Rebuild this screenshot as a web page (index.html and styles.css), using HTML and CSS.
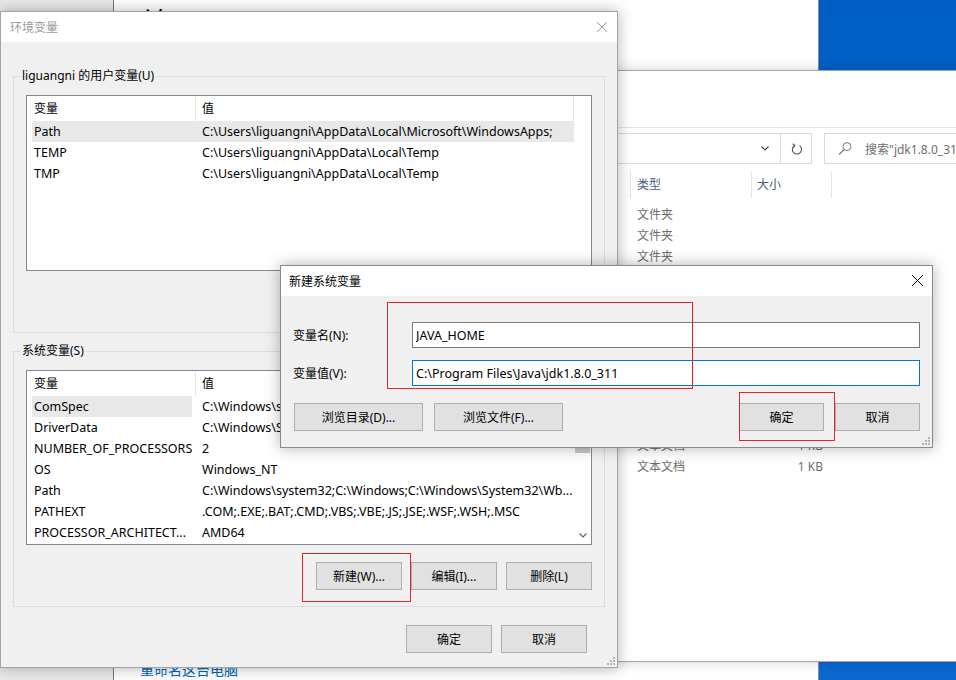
FILE: index.html
```html
<!DOCTYPE html>
<html lang="zh-CN">
<head>
    <meta charset="UTF-8">
    <title>环境变量</title>
    <link rel="stylesheet" href="styles.css">
</head>
<body>
<div class="desktop">

    <!-- windows behind the dialogs -->
    <div class="window side-window"></div>

    <div class="window settings">
        <h1 class="settings-title">关于</h1>
        <a class="settings-link">重命名这台电脑</a>
    </div>

    <div class="window explorer">
        <div class="ribbon"></div>
        <div class="nav-row">
            <div class="address">
                <span class="address-drop">
                    <svg width="8" height="5" viewBox="0 0 8 5"><path d="M0.5 0.5L4 4L7.5 0.5" fill="none" stroke="#444" stroke-width="1.1"/></svg>
                </span>
                <span class="address-refresh">
                    <svg width="12" height="12" viewBox="0 0 12 12"><path d="M3.6 2.4A4.6 4.6 0 1 0 8.6 2.6" fill="none" stroke="#555" stroke-width="1.1"/><path d="M1.6 0.8L3.9 2.5L2.2 4.6" fill="none" stroke="#555" stroke-width="1.1"/></svg>
                </span>
            </div>
            <div class="search">
                <svg width="14" height="13" viewBox="0 0 14 13"><circle cx="9" cy="4.6" r="4" fill="none" stroke="#777" stroke-width="1"/><path d="M6.2 7.5L1 12.5" stroke="#777" stroke-width="1.1"/></svg>
                <span>搜索"jdk1.8.0_311"</span>
            </div>
        </div>
        <div class="file-head">
            <div class="fcol fcol-name"></div>
            <div class="fcol fcol-type">类型</div>
            <div class="fcol fcol-size">大小</div>
        </div>
        <div class="file-list">
            <div class="file-row"><span class="f-name">bin</span><span class="f-type">文件夹</span><span class="f-size"></span></div>
            <div class="file-row"><span class="f-name">include</span><span class="f-type">文件夹</span><span class="f-size"></span></div>
            <div class="file-row"><span class="f-name">jre</span><span class="f-type">文件夹</span><span class="f-size"></span></div>
            <div class="file-row"><span class="f-name">legal</span><span class="f-type">文件夹</span><span class="f-size"></span></div>
            <div class="file-row"><span class="f-name">lib</span><span class="f-type">文件夹</span><span class="f-size"></span></div>
            <div class="file-row"><span class="f-name">COPYRIGHT</span><span class="f-type">文件</span><span class="f-size">4 KB</span></div>
            <div class="file-row"><span class="f-name">javafx-src.zip</span><span class="f-type">压缩(zipped)文件夹</span><span class="f-size">5,097 KB</span></div>
            <div class="file-row"><span class="f-name">LICENSE</span><span class="f-type">文件</span><span class="f-size">1 KB</span></div>
            <div class="file-row"><span class="f-name">README.html</span><span class="f-type">HTML 文档</span><span class="f-size">1 KB</span></div>
            <div class="file-row"><span class="f-name">release</span><span class="f-type">文件</span><span class="f-size">1 KB</span></div>
            <div class="file-row"><span class="f-name">src.zip</span><span class="f-type">压缩(zipped)文件夹</span><span class="f-size">20,678 KB</span></div>
            <div class="file-row"><span class="f-name">jmc.txt</span><span class="f-type">文本文档</span><span class="f-size">1 KB</span></div>
            <div class="file-row"><span class="f-name">javafx.txt</span><span class="f-type">文本文档</span><span class="f-size">1 KB</span></div>
        </div>
    </div>

    <!-- 环境变量 -->
    <div class="window dialog env-dialog">
        <div class="titlebar">
            <span class="title">环境变量</span>
            <svg class="close" width="10" height="10" viewBox="0 0 10 10"><path d="M0 0L10 10M10 0L0 10" stroke="#999" stroke-width="1"/></svg>
        </div>
        <div class="dialog-body">
            <fieldset class="group">
                <legend>liguangni 的用户变量(U)</legend>
                <div class="listview">
                    <div class="lv-main">
                        <div class="lv-head">
                            <div class="lv-hcell col-name">变量</div>
                            <div class="lv-hcell col-value">值</div>
                        </div>
                        <div class="lv-row selected"><span class="cell col-name">Path</span><span class="cell col-value">C:\Users\liguangni\AppData\Local\Microsoft\WindowsApps;</span></div>
                        <div class="lv-row"><span class="cell col-name">TEMP</span><span class="cell col-value">C:\Users\liguangni\AppData\Local\Temp</span></div>
                        <div class="lv-row"><span class="cell col-name">TMP</span><span class="cell col-value">C:\Users\liguangni\AppData\Local\Temp</span></div>
                    </div>
                    <div class="lv-scroll"></div>
                </div>
                <div class="btn-row">
                    <button class="btn">新建(N)...</button>
                    <button class="btn">编辑(E)...</button>
                    <button class="btn">删除(D)</button>
                </div>
            </fieldset>

            <fieldset class="group system">
                <legend>系统变量(S)</legend>
                <div class="listview">
                    <div class="lv-main">
                        <div class="lv-head">
                            <div class="lv-hcell col-name">变量</div>
                            <div class="lv-hcell col-value">值</div>
                        </div>
                        <div class="lv-row cell-selected"><span class="cell col-name">ComSpec</span><span class="cell col-value">C:\Windows\system32\cmd.exe</span></div>
                        <div class="lv-row"><span class="cell col-name">DriverData</span><span class="cell col-value">C:\Windows\System32\Drivers\DriverData</span></div>
                        <div class="lv-row"><span class="cell col-name">NUMBER_OF_PROCESSORS</span><span class="cell col-value">2</span></div>
                        <div class="lv-row"><span class="cell col-name">OS</span><span class="cell col-value">Windows_NT</span></div>
                        <div class="lv-row"><span class="cell col-name">Path</span><span class="cell col-value">C:\Windows\system32;C:\Windows;C:\Windows\System32\Wb...</span></div>
                        <div class="lv-row"><span class="cell col-name">PATHEXT</span><span class="cell col-value">.COM;.EXE;.BAT;.CMD;.VBS;.VBE;.JS;.JSE;.WSF;.WSH;.MSC</span></div>
                        <div class="lv-row"><span class="cell col-name">PROCESSOR_ARCHITECT...</span><span class="cell col-value">AMD64</span></div>
                    </div>
                    <div class="lv-scroll">
                        <div class="sb-arrow"></div>
                        <div class="sb-thumb"></div>
                        <div class="sb-track"></div>
                        <div class="sb-arrow">
                            <svg width="8" height="5" viewBox="0 0 8 5"><path d="M0.5 0.5L4 4L7.5 0.5" fill="none" stroke="#606060" stroke-width="1.2"/></svg>
                        </div>
                    </div>
                </div>
                <div class="btn-row">
                    <button class="btn">新建(W)...</button>
                    <button class="btn">编辑(I)...</button>
                    <button class="btn">删除(L)</button>
                </div>
            </fieldset>

            <div class="dialog-footer">
                <button class="btn">确定</button>
                <button class="btn">取消</button>
            </div>
        </div>
        <svg class="grip" width="8" height="8" viewBox="0 0 8 8" fill="#b5b5b5"><rect x="6" y="0" width="2" height="2"/><rect x="3" y="3" width="2" height="2"/><rect x="6" y="3" width="2" height="2"/><rect x="0" y="6" width="2" height="2"/><rect x="3" y="6" width="2" height="2"/><rect x="6" y="6" width="2" height="2"/></svg>
    </div>

    <!-- 新建系统变量 -->
    <div class="window dialog new-dialog">
        <div class="titlebar">
            <span class="title active">新建系统变量</span>
            <svg class="close" width="11" height="11" viewBox="0 0 11 11"><path d="M0 0L11 11M11 0L0 11" stroke="#000" stroke-width="1"/></svg>
        </div>
        <div class="dialog-body new-body">
            <div class="field-grid">
                <label>变量名(N):</label>
                <input class="textbox" value="JAVA_HOME">
                <label>变量值(V):</label>
                <input class="textbox focused" value="C:\Program Files\Java\jdk1.8.0_311">
            </div>
            <div class="new-actions">
                <button class="btn btn-wide">浏览目录(D)...</button>
                <button class="btn btn-wide">浏览文件(F)...</button>
                <button class="btn push">确定</button>
                <button class="btn">取消</button>
            </div>
        </div>
        <svg class="grip" width="8" height="8" viewBox="0 0 8 8" fill="#b5b5b5"><rect x="6" y="0" width="2" height="2"/><rect x="3" y="3" width="2" height="2"/><rect x="6" y="3" width="2" height="2"/><rect x="0" y="6" width="2" height="2"/><rect x="3" y="6" width="2" height="2"/><rect x="6" y="6" width="2" height="2"/></svg>
    </div>

    <!-- red annotation boxes -->
    <div class="mark mark-fields"></div>
    <div class="mark mark-ok"></div>
    <div class="mark mark-new"></div>
</div>
</body>
</html>
```

FILE: styles.css
```css
* {
    box-sizing: border-box;
}

body {
    margin: 0;
    font-family: "Noto Sans", "Noto Sans CJK SC", sans-serif;
    font-size: 12px;
    color: #000;
}

.desktop {
    position: relative;
    width: 956px;
    height: 680px;
    overflow: hidden;
    background: linear-gradient(#005fc5, #0a68cf);
}

.window {
    position: absolute;
}

/* background windows */
.side-window {
    left: 0;
    top: 0;
    width: 114px;
    height: 680px;
    background-color: #e9e9e9;
}

.settings {
    left: 113px;
    top: 0;
    width: 706px;
    height: 700px;
    background-color: #fff;
    border-left: 1px solid #777;
    border-right: 1px solid #8c8c8c;
    padding-left: 26px;
}

.settings-title {
    margin: 8px 0 0;
    font-size: 28px;
    line-height: 28px;
    font-weight: normal;
}

.settings-link {
    display: block;
    margin-top: 624px;
    font-size: 14px;
    line-height: 20px;
    color: #0067b8;
}

.explorer {
    left: 560px;
    top: 70px;
    width: 500px;
    height: 592px;
    background-color: #fff;
    border: 1px solid #a3a3a3;
    box-shadow: 0 0 12px rgba(0, 0, 0, 0.18);
}

.ribbon {
    height: 57px;
    border-bottom: 1px solid #e5e5e5;
}

.nav-row {
    display: flex;
    gap: 12px;
    height: 31px;
    margin-top: 5px;
    padding-left: 40px;
}

.address {
    display: flex;
    justify-content: flex-end;
    width: 211px;
    border: 1px solid #d9d9d9;
}

.address-drop,
.address-refresh {
    display: flex;
    align-items: center;
    justify-content: center;
}

.address-drop {
    width: 28px;
    padding-right: 3px;
}

.address-refresh {
    width: 31px;
    border-left: 1px solid #d9d9d9;
    padding-left: 2px;
}

.search {
    display: flex;
    align-items: center;
    gap: 13px;
    width: 220px;
    padding-left: 13px;
    border: 1px solid #d9d9d9;
    color: #6d6d6d;
    white-space: nowrap;
}

.file-head {
    display: flex;
    height: 27px;
    margin-top: 7px;
    line-height: 27px;
    color: #4c607a;
}

.fcol {
    border-right: 1px solid #e5e5e5;
}

.fcol-name { width: 70px; }
.fcol-type { width: 121px; padding-left: 6px; }
.fcol-size { width: 80px; padding-left: 5px; }

.file-list {
    padding-top: 6px;
    color: #6d6d6d;
}

.file-row {
    display: flex;
    height: 21px;
    line-height: 21px;
    white-space: nowrap;
}

.f-name { width: 70px; visibility: hidden; }
.f-type { width: 121px; padding-left: 6px; overflow: hidden; }
.f-size { width: 80px; padding-right: 9px; text-align: right; }

/* dialogs */
.dialog {
    background-color: #f0f0f0;
    box-shadow: 0 0 14px rgba(0, 0, 0, 0.3);
}

.titlebar {
    display: flex;
    align-items: center;
    justify-content: space-between;
    height: 30px;
    padding: 0 10px 1px 9px;
    background-color: #fff;
}

.title {
    color: #9a9a9a;
}

.title.active {
    color: #000;
}

.grip {
    position: absolute;
    right: 2px;
    bottom: 2px;
}

.env-dialog {
    left: 0;
    top: 11px;
    width: 618px;
    height: 657px;
    border: 1px solid #a3a3a3;
}

.dialog-body {
    padding: 26px 12px 0;
}

.group {
    margin: 0;
    min-width: 0;
    padding: 11px 12px 17px;
    border: 1px solid #dcdcdc;
}

.group.system {
    margin-top: 10px;
    padding-bottom: 16px;
}

.group legend {
    margin-left: -6px;
    padding: 0 2px;
    line-height: 16px;
}

.listview {
    display: flex;
    height: 176px;
    border: 1px solid #828790;
    background-color: #fff;
    overflow: hidden;
}

.system .listview {
    height: 175px;
}

.lv-main {
    width: 547px;
}

.lv-head {
    display: flex;
    height: 25px;
    line-height: 25px;
}

.lv-hcell {
    border-right: 1px solid #e5e5e5;
}

.lv-hcell.col-name { width: 169px; padding-left: 7px; }
.lv-hcell.col-value { width: 378px; padding-left: 6px; }

.lv-row {
    display: flex;
    width: 542px;
    height: 21px;
    margin-left: 5px;
    font-size: 12.5px;
    line-height: 21px;
    white-space: nowrap;
}

.lv-row .cell {
    overflow: hidden;
}

.lv-row .col-name {
    width: 160px;
    margin-right: 3px;
    padding-left: 2px;
}

.lv-row .col-value {
    flex: 1;
    padding-left: 7px;
}

.lv-row.selected,
.lv-row.cell-selected .col-name {
    background-color: #e8e8e8;
}

.lv-scroll {
    display: flex;
    flex-direction: column;
    width: 18px;
}

.sb-arrow {
    display: flex;
    align-items: center;
    justify-content: center;
    height: 17px;
}

.sb-thumb {
    height: 65px;
    margin: 0 1px;
    background-color: #c8c8c8;
}

.sb-track {
    flex: 1;
}

.btn-row {
    display: flex;
    justify-content: flex-end;
    gap: 9px;
    margin-top: 16px;
}

.system .btn-row {
    margin-top: 17px;
}

.btn {
    width: 86px;
    height: 28px;
    padding: 0;
    font: inherit;
    color: #000;
    background-color: #e1e1e1;
    border: 1px solid #adadad;
}

.dialog-footer {
    display: flex;
    justify-content: flex-end;
    gap: 9px;
    margin: 18px 18px 0 0;
}

/* 新建系统变量 */
.new-dialog {
    left: 280px;
    top: 265px;
    width: 653px;
    height: 183px;
    border: 1px solid #8a8a8a;
}

.new-dialog .titlebar {
    padding: 0 9px 1px 8px;
}

.field-grid {
    display: grid;
    grid-template-columns: 119px 1fr;
    align-items: center;
    row-gap: 12px;
}

.textbox {
    width: 100%;
    height: 26px;
    margin: 0;
    padding: 0 3px;
    font: inherit;
    font-size: 12.5px;
    color: #000;
    background-color: #fff;
    border: 1px solid #7a7a7a;
    outline: none;
}

.textbox.focused {
    border-color: #0078d7;
}

.new-actions {
    display: flex;
    gap: 11px;
    margin-top: 17px;
    padding-left: 1px;
}

.new-actions .btn {
    width: 85px;
}

.new-actions .btn-wide {
    width: 129px;
}

.new-actions .push {
    margin-left: auto;
}

/* annotation boxes */
.mark {
    position: absolute;
    border: 1px solid #e0262b;
}

.mark-fields { left: 387px; top: 302px; width: 306px; height: 87px; }
.mark-ok { left: 739px; top: 392px; width: 96px; height: 49px; }
.mark-new { left: 302px; top: 553px; width: 109px; height: 49px; }
```
